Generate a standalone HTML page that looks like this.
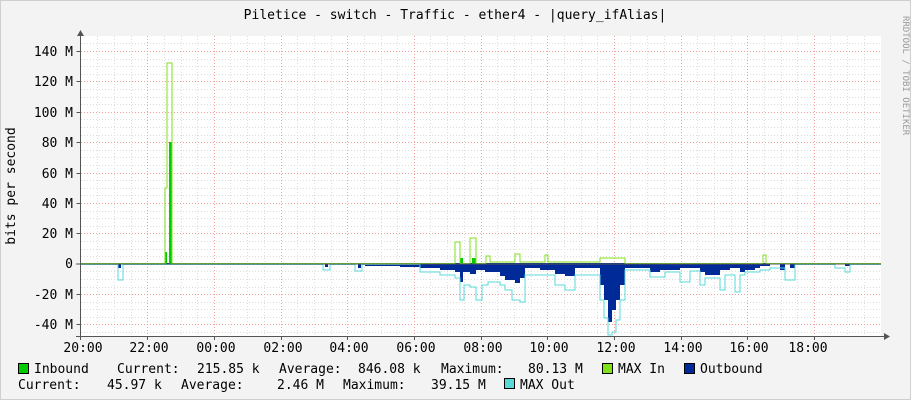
<!DOCTYPE html>
<html><head><meta charset="utf-8"><style>
html,body{margin:0;padding:0;background:#f3f3f3;}
svg{display:block;}
text{font-family:"DejaVu Sans Mono","Liberation Mono",monospace;font-size:13px;fill:#000;}
</style></head><body>
<svg width="911" height="400" viewBox="0 0 911 400" xmlns="http://www.w3.org/2000/svg">
<rect x="0" y="0" width="911" height="400" fill="#f3f3f3"/>
<rect x="0.5" y="0.5" width="910" height="399" fill="none" stroke="#cfcfcf"/>
<rect x="81" y="36" width="800" height="300" fill="#fff"/>
<g stroke="#ddd" stroke-dasharray="1,2" stroke-width="1">
<path d="M81,43.5H881M81,59.5H881M81,66.5H881M81,74.5H881M81,89.5H881M81,97.5H881M81,104.5H881M81,119.5H881M81,127.5H881M81,135.5H881M81,150.5H881M81,157.5H881M81,165.5H881M81,180.5H881M81,188.5H881M81,195.5H881M81,211.5H881M81,218.5H881M81,226.5H881M81,241.5H881M81,249.5H881M81,256.5H881M81,271.5H881M81,279.5H881M81,287.5H881M81,302.5H881M81,309.5H881M81,317.5H881M81,332.5H881"/>
<path d="M97.5,36V336M114.5,36V336M131.5,36V336M164.5,36V336M181.5,36V336M197.5,36V336M230.5,36V336M247.5,36V336M264.5,36V336M297.5,36V336M314.5,36V336M331.5,36V336M364.5,36V336M381.5,36V336M397.5,36V336M430.5,36V336M447.5,36V336M464.5,36V336M497.5,36V336M514.5,36V336M531.5,36V336M564.5,36V336M581.5,36V336M597.5,36V336M630.5,36V336M647.5,36V336M664.5,36V336M697.5,36V336M714.5,36V336M731.5,36V336M764.5,36V336M781.5,36V336M797.5,36V336M830.5,36V336M847.5,36V336M864.5,36V336"/>
</g>
<g stroke="#f2a0a0" stroke-dasharray="1,2" stroke-width="1">
<path d="M81,51.5H881M81,81.5H881M81,112.5H881M81,142.5H881M81,173.5H881M81,203.5H881M81,233.5H881M81,294.5H881M81,324.5H881"/>
<path d="M147.5,36V336M214.5,36V336M281.5,36V336M347.5,36V336M414.5,36V336M481.5,36V336M547.5,36V336M614.5,36V336M681.5,36V336M747.5,36V336M814.5,36V336"/>
</g>
<path fill="#002a97" d="M81,264H118V268H121V264H325V267H328V264H358V268H361V264H365V266H400V267H420V268H440V270H455V272H460V282H463V272H470V274H476V270H485V272H500V276H505V280H515V283H520V278H525V268H540V270H555V274H565V276H575V268H600V285H604V300H608V322H612V310H616V300H620V285H625V268H650V272H660V270H680V268H700V272H705V275H720V270H730V268H740V272H745V270H755V268H760V266H770V264H780V270H785V264H790V268H795V264H845V266H850V264H881V263H81Z"/>
<path fill="#00cc00" d="M165,264V252H167V264H169V142H172V264Z M460,264V258H463V264Z M472,264V258H476V264Z"/>
<path fill="none" stroke="#7fe21a" stroke-width="1" d="M81,263.5H165V188H167V63H172V263.5H455V242H460V263.5H470V238H476V263.5H486V256H490V262H515V254H520V262H545V255H548V262H600V258H625V263.5H763V255H766V263.5H881"/>
<path fill="none" stroke="#5ad8d8" stroke-width="1" d="M81,264.5H118V280H123V264.5H323V270H330V264.5H355V271H362V264.5H420V272H440V275H455V278H460V300H464V285H470V287H476V300H482V285H488V282H500V285H505V290H512V300H520V302H525V275H555V285H565V290H575V275H600V300H604V318H608V335H612V332H616V320H620V300H625V270H650V277H665V272H680V282H690V271H700V285H705V278H720V290H725V275H735V292H740V275H745V272H760V270H770V268H785V280H795V264.5H835V268H845V272H850V264.5H881"/>
<path stroke="#555" stroke-width="1" fill="none" d="M80.5,36V340M76,336.5H884M76,264H881"/>
<path fill="#555" d="M884,333L890,336.5L884,340Z M77,36L80.5,30L84,36Z"/>
<path stroke="#555" d="M76.5,51.5H81M76.5,81.5H81M76.5,112.5H81M76.5,142.5H81M76.5,173.5H81M76.5,203.5H81M76.5,233.5H81M76.5,294.5H81M76.5,324.5H81M147.5,336V340M214.5,336V340M281.5,336V340M347.5,336V340M414.5,336V340M481.5,336V340M547.5,336V340M614.5,336V340M681.5,336V340M747.5,336V340M814.5,336V340"/>
<text x="455" y="19" text-anchor="middle">Piletice - switch - Traffic - ether4 - |query_ifAlias|</text>
<text transform="translate(903,16) rotate(90)" style="font-size:9px;fill:#999">RRDTOOL / TOBI OETIKER</text>
<text transform="translate(15,186) rotate(-90)" text-anchor="middle">bits per second</text>
<g text-anchor="end">
<text x="73" y="56">140 M</text><text x="73" y="86">120 M</text><text x="73" y="117">100 M</text>
<text x="73" y="147">80 M</text><text x="73" y="178">60 M</text><text x="73" y="208">40 M</text>
<text x="73" y="238">20 M</text><text x="73" y="268">0</text><text x="73" y="299">-20 M</text><text x="73" y="329">-40 M</text>
</g>
<g text-anchor="middle">
<text x="83" y="352">20:00</text><text x="149" y="352">22:00</text><text x="216" y="352">00:00</text>
<text x="283" y="352">02:00</text><text x="349" y="352">04:00</text><text x="416" y="352">06:00</text>
<text x="483" y="352">08:00</text><text x="549" y="352">10:00</text><text x="616" y="352">12:00</text>
<text x="683" y="352">14:00</text><text x="749" y="352">16:00</text><text x="808" y="352">18:00</text>
</g>
<rect x="18.5" y="363.5" width="10" height="10" fill="#00cc00" stroke="#000"/>
<text x="34" y="373">Inbound</text>
<text x="117" y="373">Current:</text><text x="197" y="373">215.85 k</text>
<text x="279" y="373">Average:</text><text x="358" y="373">846.08 k</text>
<text x="441" y="373">Maximum:</text><text x="528" y="373">80.13 M</text>
<rect x="602.5" y="363.5" width="10" height="10" fill="#7fe21a" stroke="#000"/>
<text x="618" y="373">MAX In</text>
<rect x="684.5" y="363.5" width="10" height="10" fill="#002a97" stroke="#000"/>
<text x="700" y="373">Outbound</text>
<text x="18" y="389">Current:</text><text x="107" y="389">45.97 k</text>
<text x="181" y="389">Average:</text><text x="277" y="389">2.46 M</text>
<text x="343" y="389">Maximum:</text><text x="431" y="389">39.15 M</text>
<rect x="504.5" y="378.5" width="10" height="10" fill="#5ad8d8" stroke="#000"/>
<text x="520" y="389">MAX Out</text>
</svg>
</body></html>
